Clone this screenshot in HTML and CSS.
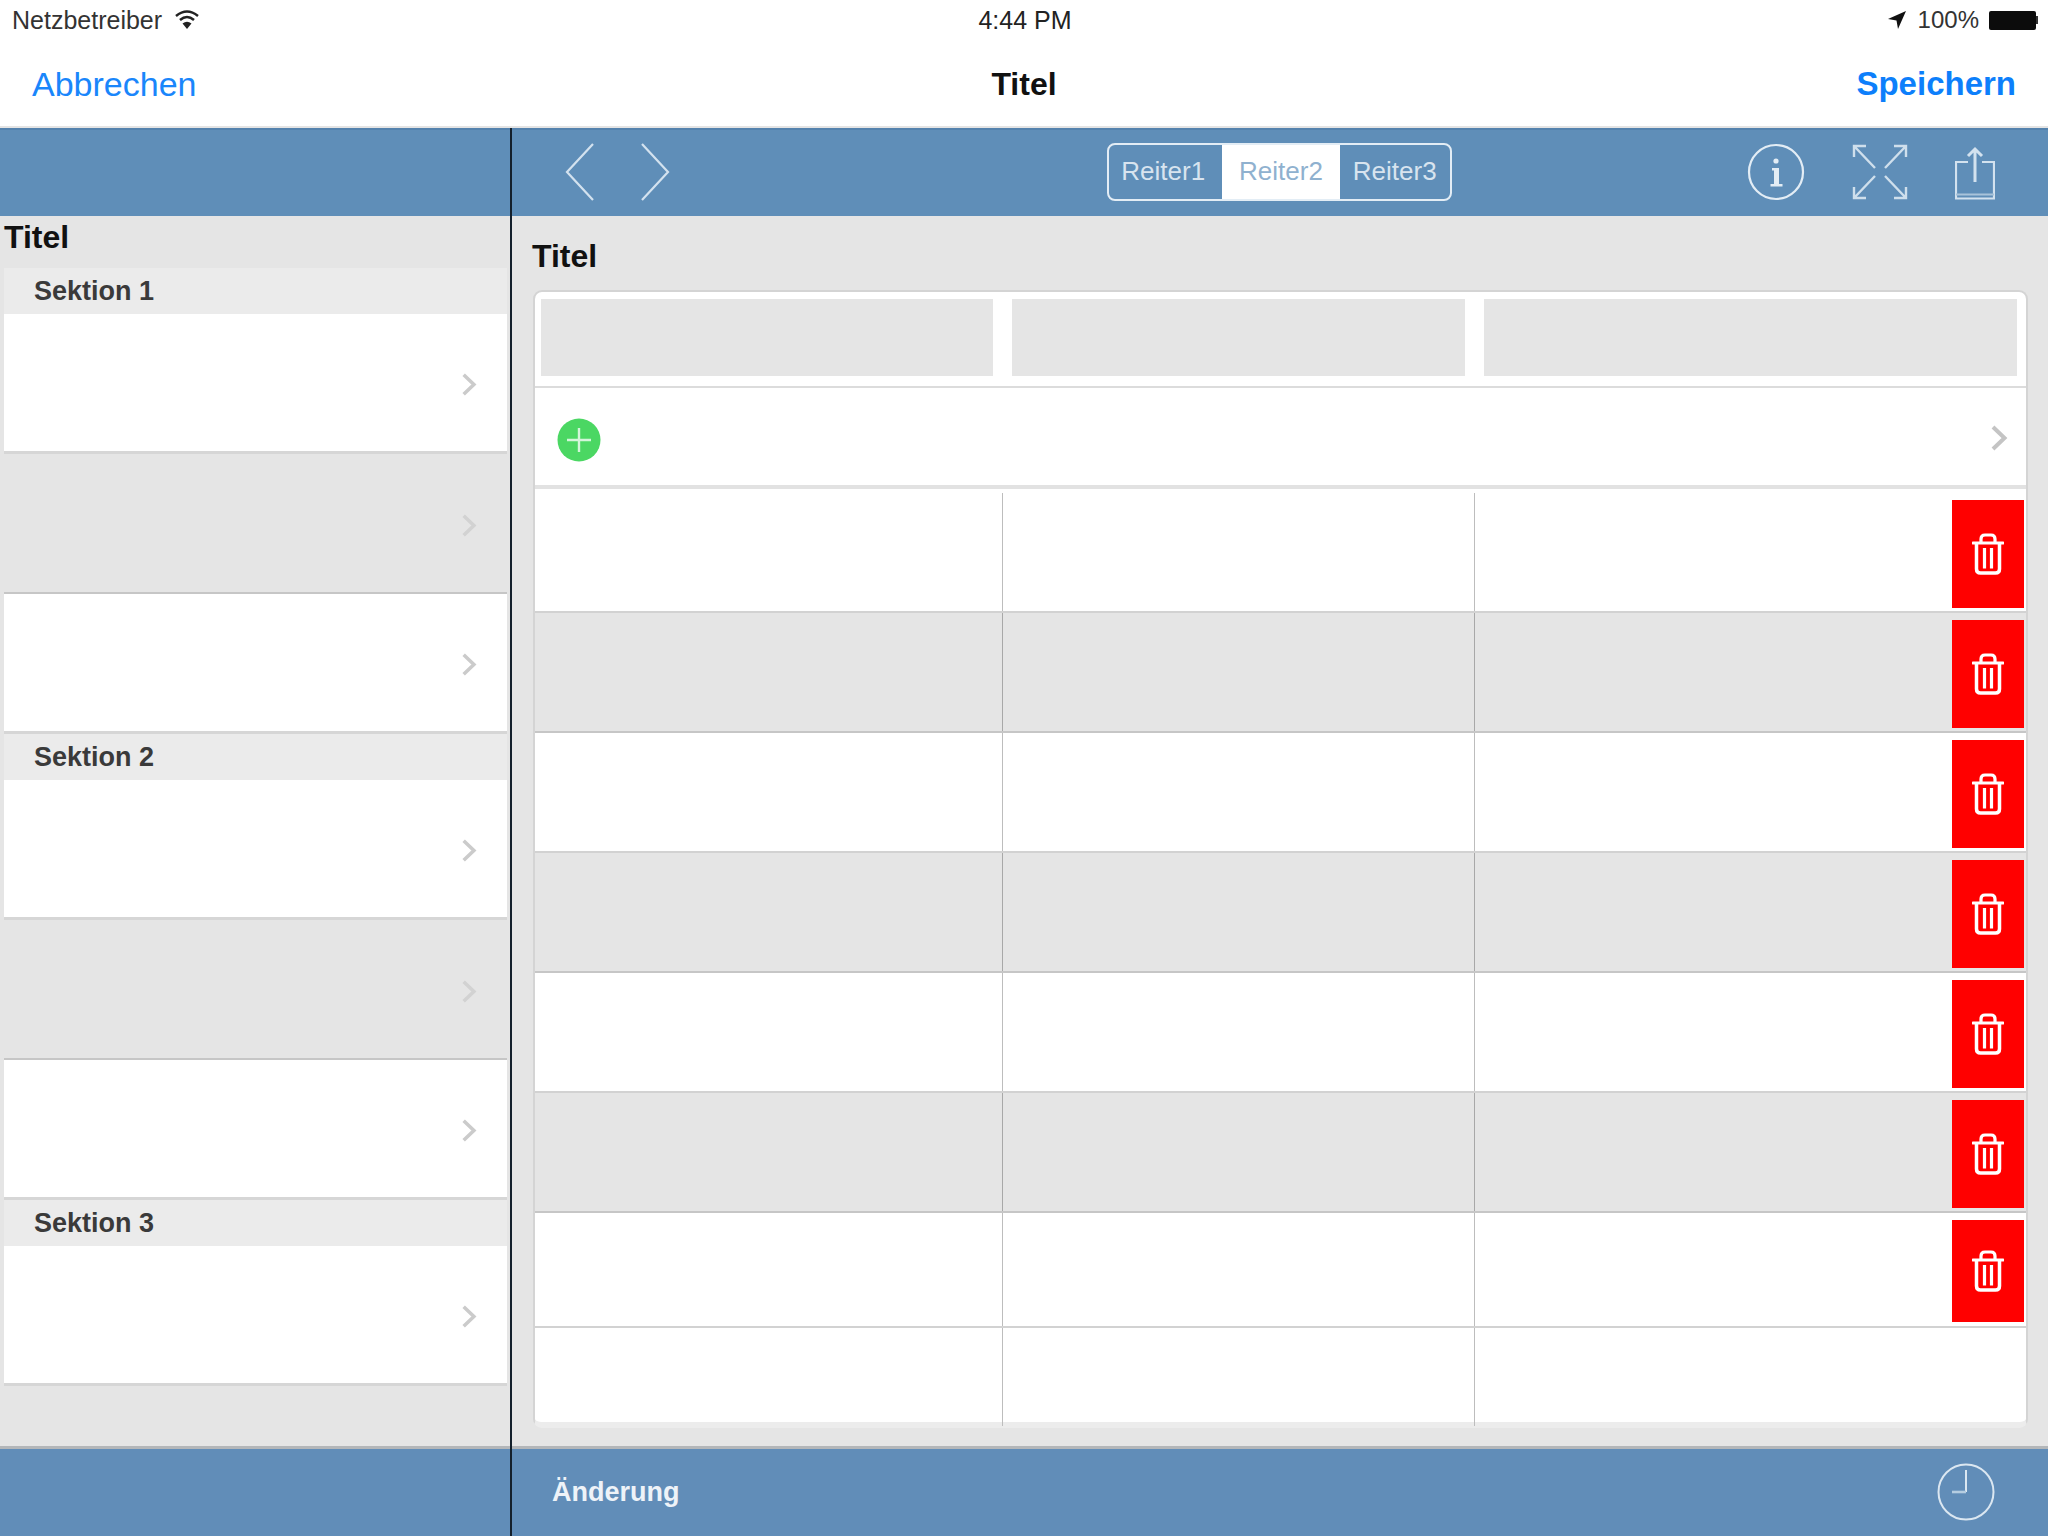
FILE: index.html
```html
<!DOCTYPE html>
<html lang="de">
<head>
<meta charset="utf-8">
<title>Titel</title>
<link rel="stylesheet" href="styles.css">
</head>
<body>
<svg class="defs" width="0" height="0" aria-hidden="true">
  <symbol id="chev" viewBox="0 0 18 28"><path d="M3 3 L14.5 14 L3 25" fill="none" stroke="currentColor" stroke-width="4"/></symbol>
  <symbol id="trash" viewBox="0 0 32 42">
    <path d="M9 9 V6 Q9 2 13 2 H19 Q23 2 23 6 V9" fill="none" stroke="#fff" stroke-width="3.200"/>
    <path d="M1 10 H31" fill="none" stroke="#fff" stroke-width="3.200" stroke-linecap="round"/>
    <path d="M4.500 10 V36 Q4.500 40 8.500 40 H23.500 Q27.500 40 27.500 36 V10" fill="none" stroke="#fff" stroke-width="3.500"/>
    <path d="M12.500 15 V35.500 M19.500 15 V35.500" fill="none" stroke="#fff" stroke-width="3.200"/>
  </symbol>
</svg>
<div class="app">
  <header class="status">
    <div class="status-left">
      <span>Netzbetreiber</span>
      <svg class="wifi" viewBox="0 0 26 20"><path d="M2 7 Q13 -2 24 7" fill="none" stroke="#222" stroke-width="2.500"/><path d="M6 11 Q13 5 20 11" fill="none" stroke="#222" stroke-width="2.500"/><path d="M13 20 L8.500 14.500 Q13 11 17.500 14.500 Z" fill="#222"/></svg>
    </div>
    <div class="status-time">4:44 PM</div>
    <div class="status-right">
      <svg class="loc" viewBox="0 0 18 18"><path d="M18 0 L0 8 L8.500 9.500 L10 18 Z" fill="#111"/></svg>
      <span>100%</span>
      <div class="battery"><div class="battery-body"></div><div class="battery-nib"></div></div>
    </div>
  </header>
  <nav class="nav">
    <a class="nav-cancel">Abbrechen</a>
    <div class="nav-title">Titel</div>
    <a class="nav-save">Speichern</a>
  </nav>
  <main class="panes">
    <aside class="master">
      <div class="bar"></div>
      <div class="master-body">
        <h2 class="master-title">Titel</h2>
        <div class="section">Sektion 1</div>
        <div class="item"><svg class="chev"><use href="#chev"/></svg></div>
        <div class="item item-alt"><svg class="chev"><use href="#chev"/></svg></div>
        <div class="item"><svg class="chev"><use href="#chev"/></svg></div>
        <div class="section">Sektion 2</div>
        <div class="item"><svg class="chev"><use href="#chev"/></svg></div>
        <div class="item item-alt"><svg class="chev"><use href="#chev"/></svg></div>
        <div class="item"><svg class="chev"><use href="#chev"/></svg></div>
        <div class="section">Sektion 3</div>
        <div class="item"><svg class="chev"><use href="#chev"/></svg></div>
        <div class="item item-alt"><svg class="chev"><use href="#chev"/></svg></div>
      </div>
      <footer class="foot"></footer>
    </aside>
    <section class="detail">
      <div class="bar bar-detail">
        <div class="pager">
          <svg class="pager-icon" viewBox="0 0 30 58"><path d="M28 1 L2 29 L28 57" fill="none" stroke="#d3e2ef" stroke-width="2.200"/></svg>
          <svg class="pager-icon" viewBox="0 0 30 58"><path d="M2 1 L28 29 L2 57" fill="none" stroke="#d3e2ef" stroke-width="2.200"/></svg>
        </div>
        <div class="segments">
          <div class="segment segment-first">Reiter1</div>
          <div class="segment segment-on">Reiter2</div>
          <div class="segment">Reiter3</div>
        </div>
        <div class="tools">
          <svg class="tool-info" viewBox="0 0 58 58"><circle cx="29" cy="29" r="27" fill="none" stroke="#e3edf5" stroke-width="2.200"/><circle cx="29" cy="18" r="2.600" fill="#e3edf5"/><path d="M25 25 H32 V41 H35.500 V43.500 H23.500 V41 H27 V27.500 H25 Z" fill="#e3edf5"/></svg>
          <svg class="tool-expand" viewBox="0 0 56 56" fill="none" stroke="#cfdfec" stroke-width="2.400"><path d="M2 13 V2 H14 M2 2 L23 24"/><path d="M42 2 H54 V13 M54 2 L33 24"/><path d="M2 43 V54 H14 M2 54 L23 32"/><path d="M42 54 H54 V43 M54 54 L33 32"/></svg>
          <svg class="tool-share" viewBox="0 0 40 54" fill="none" stroke="#d3e2ef" stroke-width="2.200"><path d="M13 16 H1 V52.500 H39 V16 H27"/><path d="M20 36 V3 M13 10 L20 3 L27 10" stroke-width="3"/><path d="M1 48.500 H39" stroke="#a9c3da"/></svg>
        </div>
      </div>
      <div class="detail-body">
        <h2 class="detail-title">Titel</h2>
        <div class="card">
          <div class="card-head">
            <div class="head-cell"></div>
            <div class="head-cell"></div>
            <div class="head-cell"></div>
          </div>
          <div class="add-row">
            <svg class="add-icon" viewBox="0 0 44 44"><circle cx="22" cy="22" r="21.500" fill="#4bd763"/><path d="M22 10 V34 M10 22 H34" stroke="#d4f5da" stroke-width="2.400"/></svg>
            <svg class="chev chev-large"><use href="#chev"/></svg>
          </div>
          <div class="row row-first">
            <div class="cell"></div><div class="cell"></div>
            <div class="cell cell-last"><button class="del"><svg class="trash"><use href="#trash"/></svg></button></div>
          </div>
          <div class="row row-alt">
            <div class="cell"></div><div class="cell"></div>
            <div class="cell cell-last"><button class="del"><svg class="trash"><use href="#trash"/></svg></button></div>
          </div>
          <div class="row">
            <div class="cell"></div><div class="cell"></div>
            <div class="cell cell-last"><button class="del"><svg class="trash"><use href="#trash"/></svg></button></div>
          </div>
          <div class="row row-alt">
            <div class="cell"></div><div class="cell"></div>
            <div class="cell cell-last"><button class="del"><svg class="trash"><use href="#trash"/></svg></button></div>
          </div>
          <div class="row">
            <div class="cell"></div><div class="cell"></div>
            <div class="cell cell-last"><button class="del"><svg class="trash"><use href="#trash"/></svg></button></div>
          </div>
          <div class="row row-alt">
            <div class="cell"></div><div class="cell"></div>
            <div class="cell cell-last"><button class="del"><svg class="trash"><use href="#trash"/></svg></button></div>
          </div>
          <div class="row row-short">
            <div class="cell"></div><div class="cell"></div>
            <div class="cell cell-last"><button class="del del-short"><svg class="trash"><use href="#trash"/></svg></button></div>
          </div>
          <div class="row row-end">
            <div class="cell"></div><div class="cell"></div>
            <div class="cell cell-last"></div>
          </div>
        </div>
      </div>
      <footer class="foot foot-detail">
        <span class="change">Änderung</span>
        <svg class="clock" viewBox="0 0 58 58" fill="none"><circle cx="29" cy="29" r="27.500" stroke="#dbe7f1" stroke-width="2"/><path d="M29 7 V29" stroke="#dbe7f1" stroke-width="2"/><path d="M15 29 H29" stroke="#b5cde1" stroke-width="2.600"/></svg>
      </footer>
    </section>
  </main>
</div>
</body>
</html>
```
FILE: styles.css
```css
* { box-sizing: border-box; }
html, body { margin: 0; padding: 0; }
body {
  width: 2048px;
  height: 1536px;
  overflow: hidden;
  background: #fff;
  font-family: "Liberation Sans", Arial, sans-serif;
  color: #111;
}
.defs { position: absolute; }
.app { display: flex; flex-direction: column; height: 1536px; }

/* status bar */
.status {
  height: 40px;
  display: grid;
  grid-template-columns: 1fr auto 1fr;
  align-items: center;
  padding: 0 10px 0 12px;
  font-size: 25px;
  color: #333;
}
.status-left { display: flex; align-items: center; gap: 12px; }
.wifi { width: 26px; height: 20px; margin-top: -2px; }
.status-time { color: #222; }
.status-right { display: flex; align-items: center; justify-content: flex-end; font-size: 24px; }
.loc { width: 18px; height: 18px; margin-right: 12px; }
.battery { display: flex; align-items: center; margin-left: 10px; }
.battery-body { width: 47px; height: 19px; background: #0c0c0c; border-radius: 2px; }
.battery-nib { width: 2px; height: 8px; background: #333; }

/* navigation bar */
.nav {
  height: 88px;
  display: grid;
  grid-template-columns: 1fr auto 1fr;
  align-items: center;
  padding: 2px 32px 0;
  border-bottom: 2px solid #e4e4e4;
}
.nav-cancel { font-size: 34px; color: #1a86fb; }
.nav-title { font-size: 32px; font-weight: 700; color: #111; }
.nav-save { font-size: 33px; font-weight: 700; color: #0d7ffb; justify-self: end; }

/* panes */
.panes { flex: 1; display: flex; min-height: 0; }
.master {
  width: 512px;
  display: flex;
  flex-direction: column;
  border-right: 2px solid #14202c;
  background: #e5e5e5;
}
.detail { flex: 1; display: flex; flex-direction: column; background: #e5e5e5; }
.bar {
  height: 88px;
  background: #5f8eb8;
  border-top: 2px solid #5482ad;
  flex: none;
}
.bar-detail {
  display: grid;
  grid-template-columns: 1fr auto 1fr;
  align-items: center;
  padding: 0 53px 3px 53px;
}
.foot {
  height: 90px;
  flex: none;
  background: #618db8;
  border-top: 3px solid #b3b6b9;
}

/* master list */
.master-body { flex: 1; overflow: hidden; min-height: 0; }
.master-title {
  margin: 0;
  height: 52px;
  padding: 3px 0 0 4px;
  font-size: 32px;
  line-height: 36px;
  font-weight: 700;
  color: #111;
}
.section {
  height: 46px;
  margin: 0 3px 0 4px;
  padding-left: 30px;
  background: #ebebeb;
  font-size: 27px;
  font-weight: 700;
  line-height: 46px;
  color: #3a3a3a;
}
.item {
  height: 140px;
  margin: 0 3px 0 4px;
  padding: 4px 30px 0 0;
  display: flex;
  align-items: center;
  justify-content: flex-end;
  background: #fff;
  border-bottom: 3px solid #d6d6d6;
}
.item-alt { background: #e5e5e5; border-bottom: 2px solid #c6c6c6; }
.chev { width: 16px; height: 25px; color: #cbcbcb; display: block; }
.item-alt .chev { color: #d2d2d2; }
.chev-large { width: 18px; height: 28px; color: #c4c4c4; margin-top: 2px; }

/* detail toolbar */
.pager { display: flex; gap: 45px; }
.pager-icon { width: 30px; height: 58px; display: block; }
.segments {
  display: flex;
  width: 345px;
  height: 58px;
  margin-right: 2px;
  border: 2px solid #e3edf5;
  border-radius: 8px;
  overflow: hidden;
  font-size: 26px;
  line-height: 52px;
  color: #d8e4ef;
}
.segment { flex: 1; text-align: center; }
.segment-first { padding-right: 4px; }
.segment-on { background: #fff; color: #8fb1cf; flex: none; width: 118px; }
.tools { display: flex; align-items: center; justify-content: flex-end; gap: 47px; }
.tool-info { width: 58px; height: 58px; }
.tool-expand { width: 56px; height: 56px; }
.tool-share { width: 40px; height: 54px; margin-top: 2px; }

/* detail body */
.detail-body { flex: 1; min-height: 0; padding: 0 20px 0 21px; }
.detail-title {
  margin: 0 0 0 -1px;
  height: 74px;
  padding-top: 22px;
  font-size: 32px;
  line-height: 36px;
  font-weight: 700;
  color: #111;
}
.card {
  height: 1138px;
  background: #fff;
  border: 2px solid #d4d4d4;
  border-bottom: 6px solid #ececec;
  border-radius: 9px;
}
.card-head {
  display: grid;
  grid-template-columns: 452px 453px 1fr;
  gap: 19px;
  height: 96px;
  padding: 7px 9px 10px 6px;
  border-bottom: 2px solid #dcdcdc;
}
.head-cell { background: #e5e5e5; }
.add-row {
  height: 101px;
  display: flex;
  align-items: center;
  justify-content: space-between;
  padding: 0 18px 0 22px;
  border-bottom: 4px solid #e2e2e2;
}
.add-icon { width: 44px; height: 44px; margin-top: 6px; }

/* table rows */
.row {
  height: 120px;
  display: grid;
  grid-template-columns: 468px 472px 1fr;
  border-bottom: 2px solid #d2d2d2;
}
.row-first { height: 124px; padding-top: 4px; }
.row-alt { background: #e5e5e5; border-bottom-color: #c6c6c6; }
.row-short { height: 115px; }
.row-end { height: 98px; border-bottom: 0; }
.cell { border-right: 1px solid #bdbdbd; }
.row-alt .cell { border-right-color: #a8a8a8; }
.cell-last {
  border-right: 0;
  display: flex;
  justify-content: flex-end;
  align-items: flex-start;
  padding: 7px 2px 0 0;
}
.del {
  width: 72px;
  height: 108px;
  padding: 0;
  border: 0;
  background: #ff0000;
  display: flex;
  align-items: center;
  justify-content: center;
}
.del-short { height: 102px; }
.trash { width: 32px; height: 42px; display: block; }

/* footer */
.foot-detail {
  display: flex;
  align-items: center;
  justify-content: space-between;
  padding: 0 53px 0 40px;
}
.change { font-size: 27px; font-weight: 700; color: #eef3f8; }
.clock { width: 58px; height: 58px; margin-bottom: 2px; }
```
